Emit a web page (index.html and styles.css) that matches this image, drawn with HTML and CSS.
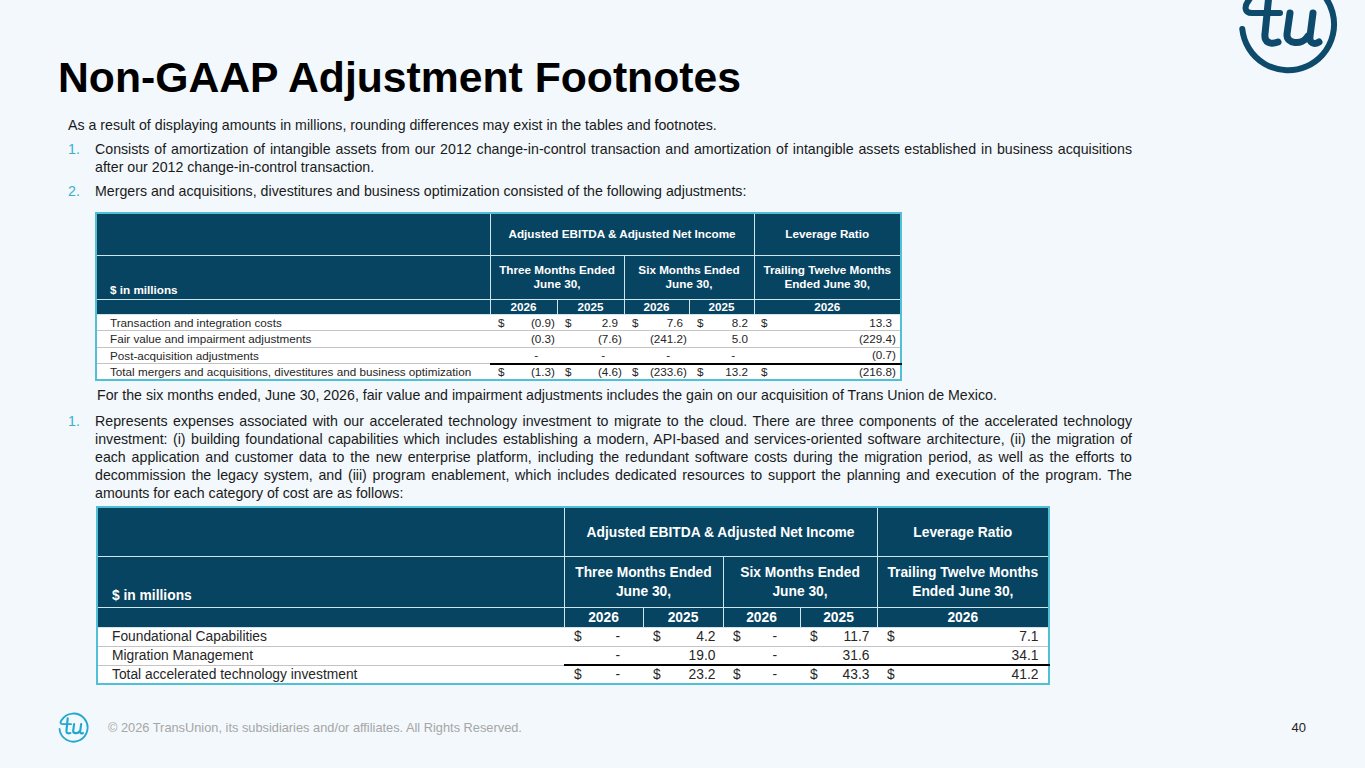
FILE: index.html
```html
<!DOCTYPE html>
<html lang="en">
<head>
<meta charset="utf-8">
<title>Non-GAAP Adjustment Footnotes</title>
<link rel="stylesheet" href="styles.css">
</head>
<body>
<svg class="defs" width="0" height="0" aria-hidden="true">
  <symbol id="tu" viewBox="-54 -54 108 108">
    <g fill="none" stroke="currentColor" stroke-linecap="round" stroke-linejoin="round">
      <path stroke-width="6" d="M -45.7,5 A 46 46 0 1 0 -39,-24 C -44,-18 -44,-11 -36,-11 L -8,-11"/>
      <path stroke-width="7" d="M -19,-30 L -23,10 C -24,18 -18,21 -10,18"/>
      <path stroke-width="7" d="M 2,-11 L -1,10 C -2,20 14,22 20,12 M 25,-11 L 22,12 C 21,19 26,21 31,18"/>
    </g>
  </symbol>
</svg>
<div class="slide">
  <header class="top">
    <h1 class="title">Non-GAAP Adjustment Footnotes</h1>
    <svg class="logo-top" width="108" height="108"><use href="#tu"/></svg>
  </header>

  <main class="content">
    <p class="intro">As a result of displaying amounts in millions, rounding differences may exist in the tables and footnotes.</p>
    <div class="item"><span class="num">1.</span><p>Consists of amortization of intangible assets from our 2012 change-in-control transaction and amortization of intangible assets established in business acquisitions after our 2012 change-in-control transaction.</p></div>
    <div class="item"><span class="num">2.</span><p>Mergers and acquisitions, divestitures and business optimization consisted of the following adjustments:</p></div>

    <table class="t t1">
      <colgroup><col class="c-lbl"><col class="c-a"><col class="c-a"><col class="c-b"><col class="c-b"><col class="c-c"></colgroup>
      <thead>
        <tr class="h1"><th class="lbl"></th><th colspan="4">Adjusted EBITDA &amp; Adjusted Net Income</th><th>Leverage Ratio</th></tr>
        <tr class="h2"><th class="lbl bottom">$ in millions</th><th colspan="2">Three Months Ended<br>June 30,</th><th colspan="2">Six Months Ended<br>June 30,</th><th>Trailing Twelve Months<br>Ended June 30,</th></tr>
        <tr class="h3"><th class="lbl"></th><th>2026</th><th>2025</th><th>2026</th><th>2025</th><th>2026</th></tr>
      </thead>
      <tbody>
        <tr><td class="lbl">Transaction and integration costs</td><td class="n"><span class="d">$</span>(0.9)</td><td class="n p"><span class="d">$</span>2.9</td><td class="n p"><span class="d">$</span>7.6</td><td class="n p"><span class="d">$</span>8.2</td><td class="n last p"><span class="d">$</span>13.3</td></tr>
        <tr><td class="lbl">Fair value and impairment adjustments</td><td class="n">(0.3)</td><td class="n">(7.6)</td><td class="n">(241.2)</td><td class="n p">5.0</td><td class="n last">(229.4)</td></tr>
        <tr><td class="lbl">Post-acquisition adjustments</td><td class="n z">-</td><td class="n z">-</td><td class="n z">-</td><td class="n z">-</td><td class="n last">(0.7)</td></tr>
        <tr class="tot"><td class="lbl">Total mergers and acquisitions, divestitures and business optimization</td><td class="n"><span class="d">$</span>(1.3)</td><td class="n"><span class="d">$</span>(4.6)</td><td class="n"><span class="d">$</span>(233.6)</td><td class="n p"><span class="d">$</span>13.2</td><td class="n last"><span class="d">$</span>(216.8)</td></tr>
      </tbody>
    </table>

    <p class="note">For the six months ended, June 30, 2026, fair value and impairment adjustments includes the gain on our acquisition of Trans Union de Mexico.</p>
    <div class="item item-b"><span class="num">1.</span><p>Represents expenses associated with our accelerated technology investment to migrate to the cloud. There are three components of the accelerated technology investment: (i) building foundational capabilities which includes establishing a modern, API-based and services-oriented software architecture, (ii) the migration of each application and customer data to the new enterprise platform, including the redundant software costs during the migration period, as well as the efforts to decommission the legacy system, and (iii) program enablement, which includes dedicated resources to support the planning and execution of the program. The amounts for each category of cost are as follows:</p></div>

    <table class="t t2">
      <colgroup><col class="c-lbl"><col class="c-a"><col class="c-a2"><col class="c-b"><col class="c-b"><col class="c-c"></colgroup>
      <thead>
        <tr class="h1"><th class="lbl"></th><th colspan="4">Adjusted EBITDA &amp; Adjusted Net Income</th><th>Leverage Ratio</th></tr>
        <tr class="h2"><th class="lbl bottom">$ in millions</th><th colspan="2">Three Months Ended<br>June 30,</th><th colspan="2">Six Months Ended<br>June 30,</th><th>Trailing Twelve Months<br>Ended June 30,</th></tr>
        <tr class="h3"><th class="lbl"></th><th>2026</th><th>2025</th><th>2026</th><th>2025</th><th>2026</th></tr>
      </thead>
      <tbody>
        <tr><td class="lbl">Foundational Capabilities</td><td class="n z"><span class="d">$</span>-</td><td class="n p"><span class="d">$</span>4.2</td><td class="n z"><span class="d">$</span>-</td><td class="n p"><span class="d">$</span>11.7</td><td class="n last p"><span class="d">$</span>7.1</td></tr>
        <tr><td class="lbl">Migration Management</td><td class="n z">-</td><td class="n p">19.0</td><td class="n z">-</td><td class="n p">31.6</td><td class="n last p">34.1</td></tr>
        <tr class="tot"><td class="lbl">Total accelerated technology investment</td><td class="n z"><span class="d">$</span>-</td><td class="n p"><span class="d">$</span>23.2</td><td class="n z"><span class="d">$</span>-</td><td class="n p"><span class="d">$</span>43.3</td><td class="n last p"><span class="d">$</span>41.2</td></tr>
      </tbody>
    </table>
  </main>

  <footer class="foot">
    <svg class="logo-foot" width="33" height="33"><use href="#tu"/></svg>
    <span class="copy">© 2026 TransUnion, its subsidiaries and/or affiliates. All Rights Reserved.</span>
    <span class="page">40</span>
  </footer>
</div>
</body>
</html>
```
FILE: styles.css
```css
* { box-sizing: border-box; }
html, body { margin: 0; padding: 0; }
body {
  font-family: "Liberation Sans", Arial, sans-serif;
  background: #f2f8fc;
}
.defs { position: absolute; width: 0; height: 0; overflow: hidden; }

.slide {
  width: 1365px;
  height: 768px;
  background: #f2f8fc;
  display: flex;
  flex-direction: column;
  overflow: hidden;
}

/* header */
.top {
  display: flex;
  justify-content: space-between;
  align-items: flex-start;
  height: 101px;
  flex: none;
}
.title {
  margin: 53px 0 0 58px;
  font-size: 42.7px;
  line-height: 48px;
  font-weight: 700;
  color: #000;
}
.logo-top {
  flex: none;
  margin: -30px 23px 0 0;
  color: #0d4a6b;
}

/* content */
.content {
  padding-left: 68px;
  width: 1132px;
  font-size: 14.2px;
  line-height: 17.3px;
  color: #1a1a1a;
}
.intro { margin: 16px 0 0; }
.item { display: flex; margin-top: 7px; }
.num { flex: none; width: 27px; color: #38b2cc; }
.item p { margin: 0; flex: 1; text-align: justify; }
.note { margin: 6px 0 0; padding-left: 29px; }
.item-b { margin-top: 7.5px; line-height: 18px; }

/* tables */
.t {
  border-collapse: collapse;
  table-layout: fixed;
  border: 2px solid #4fc0d6;
  background: #fff;
}
.t th {
  background: #074462;
  color: #fff;
  font-weight: 700;
  text-align: center;
  vertical-align: middle;
  border: 1px solid #cfe6ee;
  padding: 0;
  white-space: nowrap;
}
.t td {
  padding: 0;
  border-top: 1px solid #c4c4c4;
  color: #262626;
  white-space: nowrap;
  vertical-align: middle;
  line-height: 1;
}
.t .lbl { text-align: left; }
.t th.bottom { vertical-align: bottom; }
.t .tot td.n { border-top: 2px solid #000; }

.n { text-align: right; }
.n .d { float: left; }

/* table 1 */
.t1 {
  margin: 12px 0 0 27px;
  width: 805px;
  font-size: 11.7px;
}
.t1 .c-lbl { width: 394px; }
.t1 .c-a { width: 67px; }
.t1 .c-b { width: 65px; }
.t1 .c-c { width: 147px; }
.t1 th { line-height: 14px; }
.t1 .h1 { height: 42px; }
.t1 .h2 { height: 44px; }
.t1 .h3 { height: 14px; }
.t1 tbody tr { height: 16.5px; }
.t1 .lbl { padding-left: 13px; }
.t1 th.bottom { padding-bottom: 2px; }
.t1 .n { padding: 0 2px 0 8px; }
.t1 .n.p { padding-right: calc(2px + 0.333em); }
.t1 .n.z { padding-right: calc(2px + 1.445em); }
.t1 .n.last { padding: 0 4px 0 7px; }
.t1 .n.last.p { padding-right: calc(4px + 0.333em); }

/* table 2 */
.t2 {
  margin: 4px 0 0 28px;
  width: 952px;
  font-size: 13.8px;
}
.t2 .c-lbl { width: 467px; }
.t2 .c-a { width: 79px; }
.t2 .c-a2 { width: 80px; }
.t2 .c-b { width: 77px; }
.t2 .c-c { width: 172px; }
.t2 th { line-height: 19px; }
.t2 .h1 { height: 50px; }
.t2 .h2 { height: 51px; }
.t2 .h3 { height: 19px; }
.t2 tbody tr { height: 18.7px; }
.t2 .lbl { padding-left: 14px; }
.t2 th.bottom { padding-bottom: 2px; }
.t2 .n { padding: 0 3px 0 10px; }
.t2 .n.p { padding-right: calc(3px + 0.333em); }
.t2 .n.z { padding-right: calc(3px + 1.445em); }
.t2 .n.last { padding: 0 5px 0 10px; }
.t2 .n.last.p { padding-right: calc(5px + 0.333em); }

/* footer */
.foot {
  margin-top: auto;
  display: flex;
  align-items: center;
  padding: 0 59px 24.5px 56.5px;
  flex: none;
}
.logo-foot { flex: none; color: #22a8cf; }
.copy {
  margin-left: 18.5px;
  font-size: 12.8px;
  color: #a6a6a6;
}
.page {
  margin-left: auto;
  font-size: 13px;
  color: #222;
}
```
